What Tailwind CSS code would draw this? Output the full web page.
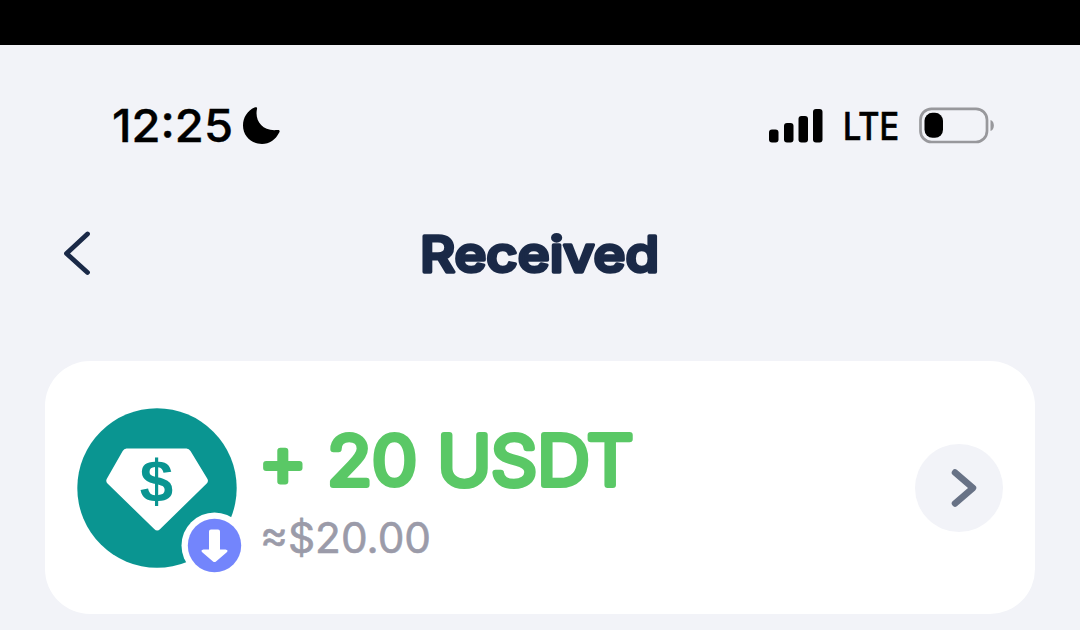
<!DOCTYPE html>
<html lang="en">
<head>
    <meta charset="UTF-8" />
    <meta name="viewport" content="width=device-width, initial-scale=1" />
    <title>Received</title>
    <script src="https://cdn.jsdelivr.net/npm/@tailwindcss/browser@4"></script>
</head>
<body class="h-[630px] w-[1080px] overflow-hidden bg-[#f2f3f8] font-['Inter',sans-serif]">
    <div class="h-[45px] bg-black"></div>

    <!-- Status bar -->
    <div class="flex h-[162px] items-center justify-between pl-[112px] pr-[84px]">
        <div class="flex items-center gap-[10px]">
            <svg class="h-[50px] w-[120px] overflow-visible" viewBox="0 0 120 50">
                <text x="0" y="41" font-size="45.5" font-weight="500" textLength="121" lengthAdjust="spacingAndGlyphs" stroke="#000" stroke-width=".4">12:25</text>
            </svg>
            <svg class="h-10 w-10" viewBox="0 0 40 40">
                <path d="M15 3C12.500 14 20 25.500 35 24c2.500-.3 3.200.6 2.200 2.600C33.500 34 27.500 38 20 38 9.500 38 1 30 1 19.500 1 11.500 5.500 4.500 12.500 1.500c1.800-.8 3-.3 2.500 1.500z" />
            </svg>
        </div>
        <div class="flex items-center">
            <svg class="h-9 w-[55px]" viewBox="0 0 55 36">
                <rect x="0" y="21.500" width="9.500" height="13" rx="3" />
                <rect x="15" y="15" width="9.500" height="19.500" rx="3" />
                <rect x="29.500" y="8" width="9.500" height="26.500" rx="3" />
                <rect x="44" y="1" width="9.500" height="33.500" rx="3" />
            </svg>
            <svg class="ml-5 h-[50px] w-[56px] overflow-visible" viewBox="0 0 56 50">
                <text x="-1" y="39" font-size="37.500" font-weight="500" textLength="56" lengthAdjust="spacingAndGlyphs" stroke="#000" stroke-width=".7">LTE</text>
            </svg>
            <svg class="ml-[19px] h-9 w-[77px] overflow-visible" viewBox="0 0 77 36">
                <rect x="1.500" y=".8" width="66.500" height="33.200" rx="11" fill="none" stroke="#98989c" stroke-width="2.700" />
                <rect x="5.500" y="4.800" width="18.500" height="25" rx="8" />
                <path d="M71.500 12c4.500 1 4.500 10 0 11z" fill="#98989c" />
            </svg>
        </div>
    </div>

    <!-- Header -->
    <header class="grid h-[94px] grid-cols-[240px_1fr_240px] items-center">
        <svg class="ml-[60px] h-[50px] w-[34px]" viewBox="0 0 34 50" fill="none" stroke="#1a2947" stroke-width="4.800" stroke-linecap="round" stroke-linejoin="round">
            <path d="M27.500 5L6.500 24.500l21 19" />
        </svg>
        <h1 class="flex justify-center">
            <svg class="h-[60px] w-[240px] overflow-visible" viewBox="0 0 240 60">
                <text x="0" y="48.300" font-size="49.500" font-weight="500" textLength="239" lengthAdjust="spacingAndGlyphs" fill="#1a2947" stroke="#1a2947" stroke-width="3.500" stroke-linejoin="round">Received</text>
            </svg>
        </h1>
    </header>

    <!-- Transaction -->
    <main class="mx-[45px] mt-[60px] flex h-[253px] items-center rounded-[45px] bg-white pl-8 pr-8">
        <svg class="h-[168px] w-[168px] shrink-0 overflow-visible" viewBox="0 0 168 168">
            <circle cx="80" cy="84" r="79.700" fill="#0a9591" />
            <path d="M49.500 44.500h60q2.500 0 4 2.500l17 28q1.200 2.500-.8 4.500l-46.500 45.500q-3 3-6 0L30.500 79.500q-2-2-.8-4.500l16-28q1.300-2.500 3.800-2.500z" fill="#fff" />
            <text x="79.500" y="98" text-anchor="middle" font-family="'Liberation Sans', sans-serif" font-size="60" font-weight="700" fill="#0a9591">$</text>
            <circle cx="137.500" cy="141.500" r="33" fill="#fff" />
            <circle cx="137.500" cy="141.500" r="26.700" fill="#7385fc" />
            <path d="M134 125.500h7q2 0 2 2v18h5.500q3.500.5 1 3l-10.500 9q-1.500 1.200-3 0l-10.500-9q-2.500-2.500 1-3h5.500v-18q0-2 2-2z" fill="#fff" />
        </svg>
        <div class="ml-[17px] flex grow flex-col">
            <svg class="h-[72px] w-[372px] overflow-visible" viewBox="0 0 372 72">
                <text x="-3" y="69.500" font-size="68" font-weight="300" textLength="374.500" lengthAdjust="spacingAndGlyphs" fill="#5ac866" stroke="#5ac866" stroke-width="6" stroke-linejoin="round">+<tspan dy="-5.500"> 20 USDT</tspan></text>
            </svg>
            <svg class="mt-4 h-[46px] w-[168px] overflow-visible" viewBox="0 0 168 46" fill="#9b9ba9" stroke="#9b9ba9" stroke-linejoin="round">
                <text x="-2" y="44" font-size="42" font-weight="400" textLength="171" lengthAdjust="spacingAndGlyphs" stroke-width=".6">≈$20.00</text>
            </svg>
        </div>
        <button class="flex size-[88px] shrink-0 items-center justify-center rounded-full bg-[#f2f3f8]" aria-label="Details">
            <svg class="ml-2.5 h-11 w-9" viewBox="0 0 36 44" fill="none" stroke="#687286" stroke-width="6.500" stroke-linecap="round" stroke-linejoin="round">
                <path d="M9 6.500L27 22 9 37.500" />
            </svg>
        </button>
    </main>
</body>
</html>
